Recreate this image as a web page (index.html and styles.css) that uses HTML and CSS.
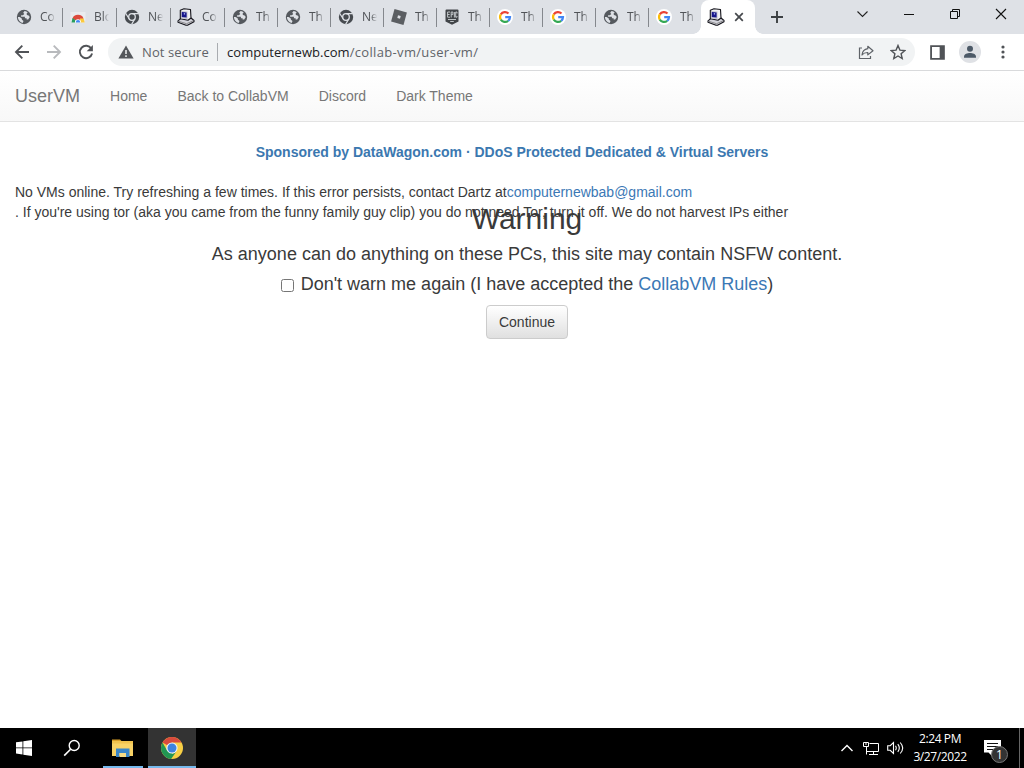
FILE: index.html
```html
<!DOCTYPE html>
<html lang="en">
<head>
<meta charset="utf-8">
<title>UserVM</title>
<link rel="stylesheet" href="styles.css">
</head>
<body>
<svg class="sprites" aria-hidden="true">
  <symbol id="globe" viewBox="0 0 16 16"><circle cx="8" cy="8" r="7.2" fill="#55595e"/><path d="M8.6 1.9 7.2 3.7l1.1 1.2-1.500 1.300H5.100v1.500h3.800v1.600h1.700v1.300h1.600l1.600-2.500-1.200-1.700-1.600-.4-.5-1.300 1.200-1.300C11 2.700 9.900 2 8.600 1.900zM1.900 7.900c0 2.900 2 5.400 4.800 6l.8-1.800-1.500-1.300-.4-1.500-2-1.300z" fill="#dee1e6"/></symbol>
  <symbol id="store" viewBox="0 0 16 16"><path d="M.5 3h15v8l-1 3h-13l-1-3z" fill="#eaecef"/><path d="M2.500 9.500a5.700 5 0 0 1 11 0L11 11H5z" fill="#dc4a3d"/><path d="M2.500 9 1.500 13.500H5L5.500 11z" fill="#2a9d5c"/><path d="M10 9.500h3.700l1 4H10z" fill="#fbc93d"/><path d="M5 13.500a3 3.200 0 0 1 6 0z" fill="#fff"/><path d="M5.800 13.500a2.200 2.400 0 0 1 4.400 0z" fill="#4285f4"/></symbol>
  <symbol id="chrome-mono" viewBox="0 0 16 16"><circle cx="8" cy="8" r="7.200" fill="#474b50"/><circle cx="8" cy="8" r="3.300" fill="#474b50" stroke="#dee1e6" stroke-width="1.300"/><path d="M8 4.600h6.700M5.100 9.700 1.600 4.200M10.900 9.800 7.600 15.400" stroke="#dee1e6" stroke-width="1.200" fill="none"/></symbol>
  <symbol id="pc" viewBox="0 0 18 18"><g stroke-linejoin="round"><path d="M1 12.800 5 9.500l9 .5 3 2.500v1.200l-6.500 3.500h-1.500L1 14.300z" fill="#d4d4dc" stroke="#15151c" stroke-width="1.100"/><path d="m1.500 13.200 8 2.500 7-3" fill="none" stroke="#777" stroke-width=".8"/><path d="M3.300 2.200 7 .8l6.500.7L14 10l-3 2.200-7.700-1.400z" fill="#f0f0f3" stroke="#15151c" stroke-width="1.100"/><path d="M4 2.900 10.500 3.500v7.700L4 10.200z" fill="#c3c3cf"/><path d="m4.800 4 4.800.5v5L4.800 8.900z" fill="#15158a"/><path d="M6.800 5.200h1.300v1.300H6.800z" fill="#b6b8ff"/></g></symbol>
  <symbol id="roblox" viewBox="0 0 16 16"><path d="M3.500.1 15.900 3.500 12.500 15.900.1 12.500z" fill="#5b5e62"/><path d="m7 6.300 2.700.7L9 9.700 6.300 9z" fill="#dee1e6"/></symbol>
  <symbol id="epic" viewBox="0 0 16 16"><path d="M2.500.5h11a1 1 0 0 1 1 1v11L8 15.800 1.500 12.500v-11a1 1 0 0 1 1-1z" fill="#414448"/><path d="M6 3H3.600v5.200H6M3.600 5.500h2M7.200 8.500V3h1.700v2.600H7.200M10.400 3v5.500M13 4.500V3h-1.300v5.200H13V7M4 10.500h8M6.200 12.500h3.600" stroke="#ccd0d4" stroke-width=".9" fill="none"/></symbol>
  <symbol id="google" viewBox="0 0 16 16"><circle cx="8" cy="8" r="8" fill="#fff"/><g fill="none" stroke-width="2.200"><path d="M3.800 5.400A5 5 0 0 1 11.500 4.500" stroke="#ea4335"/><path d="M3.800 5.400a5 5 0 0 0 0 5.200" stroke="#fbbc05"/><path d="M3.800 10.600a5 5 0 0 0 7.400 1.200" stroke="#34a853"/><path d="M11.200 11.800A5 5 0 0 0 13 8.100H8.200" stroke="#4285f4"/></g></symbol>
</svg>

<header class="browser">
  <div class="tabstrip">
    <div class="tab wide"><svg class="fav"><use href="#globe"/></svg><span>Col</span></div>
    <div class="tab wide"><svg class="fav"><use href="#store"/></svg><span>Blo</span></div>
    <div class="tab wide"><svg class="fav"><use href="#chrome-mono"/></svg><span>Nev</span></div>
    <div class="tab wide"><svg class="fav pc"><use href="#pc"/></svg><span>Col</span></div>
    <div class="tab"><svg class="fav"><use href="#globe"/></svg><span>Thi</span></div>
    <div class="tab"><svg class="fav"><use href="#globe"/></svg><span>Thi</span></div>
    <div class="tab"><svg class="fav"><use href="#chrome-mono"/></svg><span>Nev</span></div>
    <div class="tab"><svg class="fav"><use href="#roblox"/></svg><span>Thi</span></div>
    <div class="tab"><svg class="fav"><use href="#epic"/></svg><span>Thi</span></div>
    <div class="tab"><svg class="fav"><use href="#google"/></svg><span>Thi</span></div>
    <div class="tab"><svg class="fav"><use href="#google"/></svg><span>Thi</span></div>
    <div class="tab"><svg class="fav"><use href="#globe"/></svg><span>Thi</span></div>
    <div class="tab last"><svg class="fav"><use href="#google"/></svg><span>Thi</span></div>
    <div class="tab active"><svg class="fav pc"><use href="#pc"/></svg><svg class="close" viewBox="0 0 10 10"><path d="m1.200 1.200 7.600 7.600m0-7.600L1.200 8.800" stroke="#45484c" stroke-width="1.700"/></svg></div>
    <svg class="newtab" viewBox="0 0 12 12"><path d="M6 0v12M0 6h12" stroke="#3c4043" stroke-width="1.900"/></svg>
    <div class="window-controls">
      <svg viewBox="0 0 46 28"><path d="m17.500 11.500 5 5 5-5" fill="none" stroke="#222" stroke-width="1.100"/></svg>
      <svg viewBox="0 0 46 28"><path d="M18 14.500h10" stroke="#111"/></svg>
      <svg viewBox="0 0 46 28"><path d="M18.500 11.500h7v7h-7zM20.500 11.500v-2h7v7h-2" fill="none" stroke="#111"/></svg>
      <svg viewBox="0 0 46 28"><path d="m18 9 10 10m0-10L18 19" stroke="#111" stroke-width="1.100"/></svg>
    </div>
  </div>
  <div class="toolbar">
    <div class="nav-buttons">
      <svg viewBox="0 0 16 16"><path d="M15 8H2m6.300-6.300L2 8l6.300 6.300" fill="none" stroke="#505357" stroke-width="1.900"/></svg>
      <svg viewBox="0 0 16 16"><path d="M1 8h13M7.700 1.700 14 8l-6.300 6.300" fill="none" stroke="#b8babd" stroke-width="1.900"/></svg>
      <svg viewBox="0 0 16 16"><path d="M13.300 4.600A6.200 6.200 0 1 0 14.100 9.500" fill="none" stroke="#505357" stroke-width="1.900"/><path d="M14.900 1v6.200H8.700z" fill="#505357"/></svg>
    </div>
    <div class="omnibox">
      <svg class="alert" viewBox="0 0 16 14"><path d="M8 .5 15.600 13.500H.4z" fill="#54575b"/><path d="M8 5v4M8 10.300v1.600" stroke="#f1f3f4" stroke-width="1.500"/></svg>
      <span class="insecure">Not secure</span>
      <span class="url"><b>computernewb.com</b>/collab-vm/user-vm/</span>
      <svg class="share" viewBox="0 0 16 16"><path d="M4 4H1.500v10.500h11V12" fill="none" stroke="#5f6368" stroke-width="1.200"/><path d="M9.800 2.300 15 6.700l-5.200 4.200V8.500C7 8.400 5.400 9.200 4 11c.3-3.300 2.300-5.700 5.800-6.300z" fill="none" stroke="#5f6368" stroke-width="1.200" stroke-linejoin="round"/></svg>
      <svg class="star" viewBox="0 0 16 16"><path d="m8 1.500 1.900 4.600 4.900.4-3.700 3.200 1.100 4.800L8 12l-4.200 2.500 1.100-4.800L1.200 6.500l4.900-.4z" fill="none" stroke="#505357" stroke-width="1.400"/></svg>
    </div>
    <svg class="panel" viewBox="0 0 14 14"><path d="M1 1h12v12H1z" fill="#fff" stroke="#505357" stroke-width="1.700"/><path d="M9 1h4v12H9z" fill="#505357"/></svg>
    <svg class="avatar" viewBox="0 0 22 22"><circle cx="11" cy="11" r="11" fill="#dfe1e5"/><circle cx="11" cy="7.800" r="3" fill="#4c5967"/><path d="M5 16.700v-1.200c0-2.500 3.500-3.500 6-3.500s6 1 6 3.500v1.200z" fill="#4c5967"/></svg>
    <svg class="kebab" viewBox="0 0 4 14"><g fill="#505357"><circle cx="2" cy="2" r="1.600"/><circle cx="2" cy="7" r="1.600"/><circle cx="2" cy="12" r="1.600"/></g></svg>
  </div>
</header>

<main class="page">
  <nav class="navbar">
    <a class="brand">UserVM</a><a>Home</a><a>Back to CollabVM</a><a>Discord</a><a>Dark Theme</a>
  </nav>
  <p class="sponsor">Sponsored by DataWagon.com · DDoS Protected Dedicated &amp; Virtual Servers</p>
  <p class="status"><span>No VMs online. Try refreshing a few times. If this error persists, contact Dartz at<a>computernewbab@gmail.com</a></span><br><span>. If you're using tor (aka you came from the funny family guy clip) you do not need Tor, turn it off. We do not harvest IPs either</span></p>
  <section class="warning">
    <h2>Warning</h2>
    <p>As anyone can do anything on these PCs, this site may contain NSFW content.</p>
    <label><input type="checkbox"><span>Don't warn me again (I have accepted the <a>CollabVM Rules</a>)</span></label>
    <button>Continue</button>
  </section>
</main>

<footer class="taskbar">
  <div class="task"><svg width="16" height="16" viewBox="0 0 16 16"><path d="m0 2.300 6.500-.9v6.100H0zM7.300 1.300 16 0v7.500H7.300zM0 8.300h6.500v6.200L0 13.600zM7.300 8.300H16V16l-8.700-1.300z" fill="#fff"/></svg></div>
  <div class="task"><svg width="18" height="18" viewBox="0 0 18 18"><circle cx="11.200" cy="6.500" r="5" fill="none" stroke="#fff" stroke-width="1.400"/><path d="m7.600 10.200-6.400 6.400" stroke="#fff" stroke-width="1.600"/></svg></div>
  <div class="task open"><svg width="22" height="18" viewBox="0 0 22 18"><path d="M0 .5h8l2 2H0z" fill="#d99f28"/><path d="M0 2h21v15H0z" fill="#f8d266"/><path d="M0 2h21v2.500H0z" fill="#f1c34e"/><path d="M4 9.500h13.500V18h-3.500v-4H7.500v4H4z" fill="#3a86c8"/><path d="M7.500 14h6.500v4H7.500z" fill="#f8dc85"/></svg></div>
  <div class="task current"><svg width="24" height="24" viewBox="0 0 24 24"><circle cx="12" cy="12" r="11" fill="#f8cf45"/><path d="M12 12 2.500 6.500A11 11 0 0 1 21.500 6.500H12z" fill="#d94b3d"/><path d="M2.500 6.500 7.200 14.800 12 12v6l4-2-4.900 7A11 11 0 0 1 2.500 6.500z" fill="#219653"/><circle cx="12" cy="12" r="5.600" fill="#eef3f8"/><circle cx="12" cy="12" r="4.500" fill="#3e82df"/></svg></div>
  <div class="tray">
    <svg width="12" height="8" viewBox="0 0 12 8"><path d="m.5 7 5.500-5.500L11.500 7" fill="none" stroke="#fff" stroke-width="1.400"/></svg>
    <svg class="network" width="17" height="15" viewBox="0 0 17 15"><path d="M6.500 2.500h9v8h-12M10.500 10.500v3M6 13.500h9M.5 1.500h5v4h-5zM3.500 5.500v8" fill="none" stroke="#fff"/><path d="M2 3h2" stroke="#fff"/></svg>
    <svg class="sound" width="17" height="14" viewBox="0 0 17 14"><path d="M.7 4.700h2.500L6.500 1.500v11L3.200 9.300H.7zM8.500 4.800q1.500 2.200 0 4.400M10.800 3.200q3 3.800 0 7.600M13.200 1.500q5 5.500 0 11" fill="none" stroke="#fff" stroke-width="1.100"/></svg>
    <div class="clock"><span>2:24 PM</span><span>3/27/2022</span></div>
    <div class="notice"><svg width="17" height="16" viewBox="0 0 17 16"><path d="M0 0h17v12.500H8V16l-3.500-3.500H0z" fill="#fff"/><path d="M3 3.500h11M3 6.500h11M3 9.500h7" stroke="#111"/></svg><span class="badge">1</span></div>
    <i class="peek"></i>
  </div>
</footer>
</body>
</html>
```
FILE: styles.css
```css
* { box-sizing: border-box; }
body { margin: 0; width: 1024px; height: 768px; overflow: hidden; display: flex; flex-direction: column; background: #fff; color: #3a3a3a; font: 14px/20px "Liberation Sans", Arial, sans-serif; }
svg { display: block; flex: none; }
p, h2 { margin: 0; }
.sprites { display: none; }

.browser { height: 71px; flex: none; border-bottom: 1px solid #d9dadc; font-family: "Open Sans", "Noto Sans", sans-serif; }
.tabstrip { height: 34px; display: flex; align-items: center; padding-left: 9px; background: #dee1e6; }
.tab { width: 53px; height: 34px; display: flex; align-items: center; padding-left: 7px; background: linear-gradient(#85888d, #85888d) right 0 top 8px / 1px 19px no-repeat; }
.tab.wide { width: 54px; }
.tab.last { background: none; }
.fav { width: 16px; height: 16px; }
.fav.pc { width: 18px; height: 18px; margin: -1px; }
.tab span { width: 15px; margin-left: 8px; overflow: hidden; white-space: nowrap; font-size: 12px; color: #505357; -webkit-mask-image: linear-gradient(90deg, #000 60%, transparent); mask-image: linear-gradient(90deg, #000 60%, transparent); }
.tab.active { position: relative; width: 54px; margin-left: -1px; background: #fff; border-radius: 8px 8px 0 0; }
.tab.active::before, .tab.active::after { content: ""; position: absolute; bottom: 0; width: 8px; height: 8px; }
.tab.active::before { left: -8px; background: radial-gradient(circle at 0 0, #dee1e6 7.5px, #fff 8px); }
.tab.active::after { right: -8px; background: radial-gradient(circle at 100% 0, #dee1e6 7.5px, #fff 8px); }
.close { width: 10px; height: 10px; margin-left: 10px; }
.newtab { width: 12px; height: 12px; margin-left: 16px; }
.window-controls { display: flex; height: 28px; margin-left: auto; align-self: flex-start; }
.window-controls svg { width: 46px; height: 28px; }
.toolbar { height: 36px; display: flex; align-items: center; padding-left: 14px; }
.nav-buttons { display: flex; gap: 16px; width: 94px; }
.nav-buttons svg { width: 16px; height: 16px; }
.omnibox { width: 807px; height: 28px; display: flex; align-items: center; padding: 0 9px 0 10px; border-radius: 14px; background: #f1f3f4; font-size: 13px; color: #5f6368; white-space: nowrap; }
.alert { width: 16px; height: 14px; }
.insecure { width: 76px; height: 18px; margin-left: 8px; line-height: 18px; letter-spacing: .1px; border-right: 1px solid #a9acb0; }
.url { margin-left: 9px; line-height: 18px; letter-spacing: .33px; }
.url b { font-weight: 400; color: #202124; letter-spacing: .04px; }
.share { width: 16px; height: 16px; margin-left: auto; }
.star { width: 16px; height: 16px; margin-left: 16px; }
.panel { width: 15px; height: 15px; margin-left: 15px; }
.avatar { width: 22px; height: 22px; margin-left: 14px; }
.kebab { width: 4px; height: 14px; margin-left: 20px; }

.page { position: relative; flex: 1; }
.page a { color: #3b78b5; }
.navbar { height: 51px; display: flex; align-items: center; gap: 30px; padding-left: 15px; border-bottom: 1px solid #e3e3e3; background: linear-gradient(#fff, #f8f8f8); }
.page .navbar a { color: #777; }
.navbar .brand { font-size: 18px; }
.sponsor { margin-top: 20px; text-align: center; font-weight: 700; color: #3b78b0; white-space: nowrap; }
.status { margin-top: 20px; padding-left: 15px; white-space: nowrap; }
.warning { position: absolute; top: 131px; left: 30px; right: 0; display: flex; flex-direction: column; align-items: center; font-size: 18px; line-height: 26px; }
.warning h2 { font-size: 30px; font-weight: 400; line-height: 33px; }
.warning p { margin-top: 6px; }
.warning label { display: flex; align-items: center; margin-top: 4px; }
.warning input { width: 13px; height: 13px; margin: 3px 7px 0 0; }
.warning button { width: 82px; height: 34px; margin-top: 8px; padding: 0; border: 1px solid #ccc; border-radius: 4px; background: linear-gradient(#fff, #e0e0e0); color: #3a3a3a; font: 14px "Liberation Sans", Arial, sans-serif; }

.taskbar { height: 40px; flex: none; display: flex; background: #000; color: #fff; font: 12px/18px "Open Sans", "Noto Sans", sans-serif; }
.task { width: 48px; display: flex; align-items: center; justify-content: center; }
.task.open { width: 52px; padding-left: 2px; background: linear-gradient(#76b9ed, #76b9ed) 7px 100% / 40px 2px no-repeat; }
.task.current { background: #333; border-bottom: 2px solid #76b9ed; padding-top: 1px; }
.tray { display: flex; align-items: center; margin-left: auto; }
.network { margin-left: 10px; }
.sound { margin-left: 7px; }
.clock { width: 72px; display: flex; flex-direction: column; align-items: center; letter-spacing: -.4px; }
.notice { position: relative; width: 43px; padding-left: 8px; }
.badge { position: absolute; left: 15px; top: 6px; width: 17px; height: 17px; border: 1px solid #777; border-radius: 50%; background: #333; text-align: center; line-height: 15px; }
.peek { width: 1px; height: 40px; margin-right: 4px; background: #666; }
```
